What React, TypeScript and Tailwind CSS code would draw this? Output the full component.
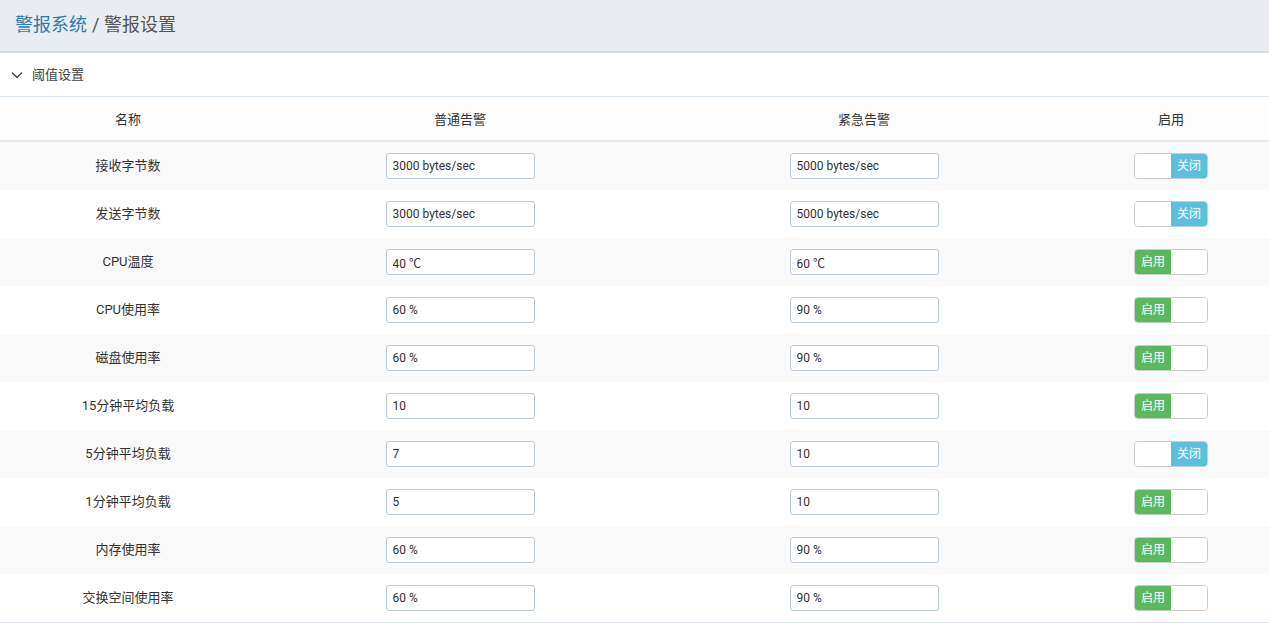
import React from 'react';

type Row = { name: string; normal: string; urgent: string; enabled: boolean };

const rows: Row[] = [
  { name: '接收字节数', normal: '3000 bytes/sec', urgent: '5000 bytes/sec', enabled: false },
  { name: '发送字节数', normal: '3000 bytes/sec', urgent: '5000 bytes/sec', enabled: false },
  { name: 'CPU温度', normal: '40 ℃', urgent: '60 ℃', enabled: true },
  { name: 'CPU使用率', normal: '60 %', urgent: '90 %', enabled: true },
  { name: '磁盘使用率', normal: '60 %', urgent: '90 %', enabled: true },
  { name: '15分钟平均负载', normal: '10', urgent: '10', enabled: true },
  { name: '5分钟平均负载', normal: '7', urgent: '10', enabled: false },
  { name: '1分钟平均负载', normal: '5', urgent: '10', enabled: true },
  { name: '内存使用率', normal: '60 %', urgent: '90 %', enabled: true },
  { name: '交换空间使用率', normal: '60 %', urgent: '90 %', enabled: true },
];

const Toggle: React.FC<{ on: boolean }> = ({ on }) => (
  <div className="w-[74px] h-[26px] flex rounded-[4px] border border-[#cccccc] overflow-hidden text-[12px] text-white">
    {on ? (
      <>
        <div className="w-1/2 bg-[#5cb85c] flex items-center justify-center">启用</div>
        <div className="w-1/2 bg-white" />
      </>
    ) : (
      <>
        <div className="w-1/2 bg-white" />
        <div className="w-1/2 bg-[#5bc0de] flex items-center justify-center">关闭</div>
      </>
    )}
  </div>
);

const Field: React.FC<{ value: string }> = ({ value }) => (
  <input
    readOnly
    value={value}
    className="w-[149px] h-[26px] px-[6px] rounded-[3px] border border-[#bccbdb] bg-white text-[12px] text-[#333] outline-none"
  />
);

const cols = 'grid grid-cols-[256px_408px_400px_214px] items-center';

export default function App() {
  return (
    <div className="w-[1269px] h-[623px] overflow-hidden bg-white text-[#333] font-['Roboto','Noto_Sans_CJK_SC',sans-serif]">
      <div className="h-[53px] bg-[#e9edf1] border-b-2 border-[#d3dde5] flex items-center px-[15px] pb-[2px] text-[18px]">
        <span className="text-[#2a7ab3]">警报系统</span>
        <span className="text-[#555] ml-[5px]">/ 警报设置</span>
      </div>
      <div className="h-[44px] border-b border-[#dde5ec] flex items-center pl-[11px] pt-[1px] text-[13px] text-[#444]">
        <svg width="12" height="12" viewBox="0 0 12 12" className="mr-[9px]">
          <path d="M1 3.5 L6 8.5 L11 3.5" fill="none" stroke="#444" strokeWidth="1.4" />
        </svg>
        阈值设置
      </div>
      <div className={`${cols} h-[45px] pt-[3px] bg-[#fcfcfc] border-b-2 border-[#e6eaee] text-[13px] text-[#333]`}>
        <div className="text-center">名称</div>
        <div className="text-center">普通告警</div>
        <div className="text-center">紧急告警</div>
        <div className="text-center">启用</div>
      </div>
      {rows.map((r, i) => (
        <div key={r.name} className={`${cols} h-[48px] text-[13px] ${i % 2 === 0 ? 'bg-[#f9f9f9]' : 'bg-white'}`}>
          <div className="text-center">{r.name}</div>
          <div className="flex justify-center"><Field value={r.normal} /></div>
          <div className="flex justify-center"><Field value={r.urgent} /></div>
          <div className="flex justify-center"><Toggle on={r.enabled} /></div>
        </div>
      ))}
      <div className="border-t border-[#dde5ec]" />
    </div>
  );
}
